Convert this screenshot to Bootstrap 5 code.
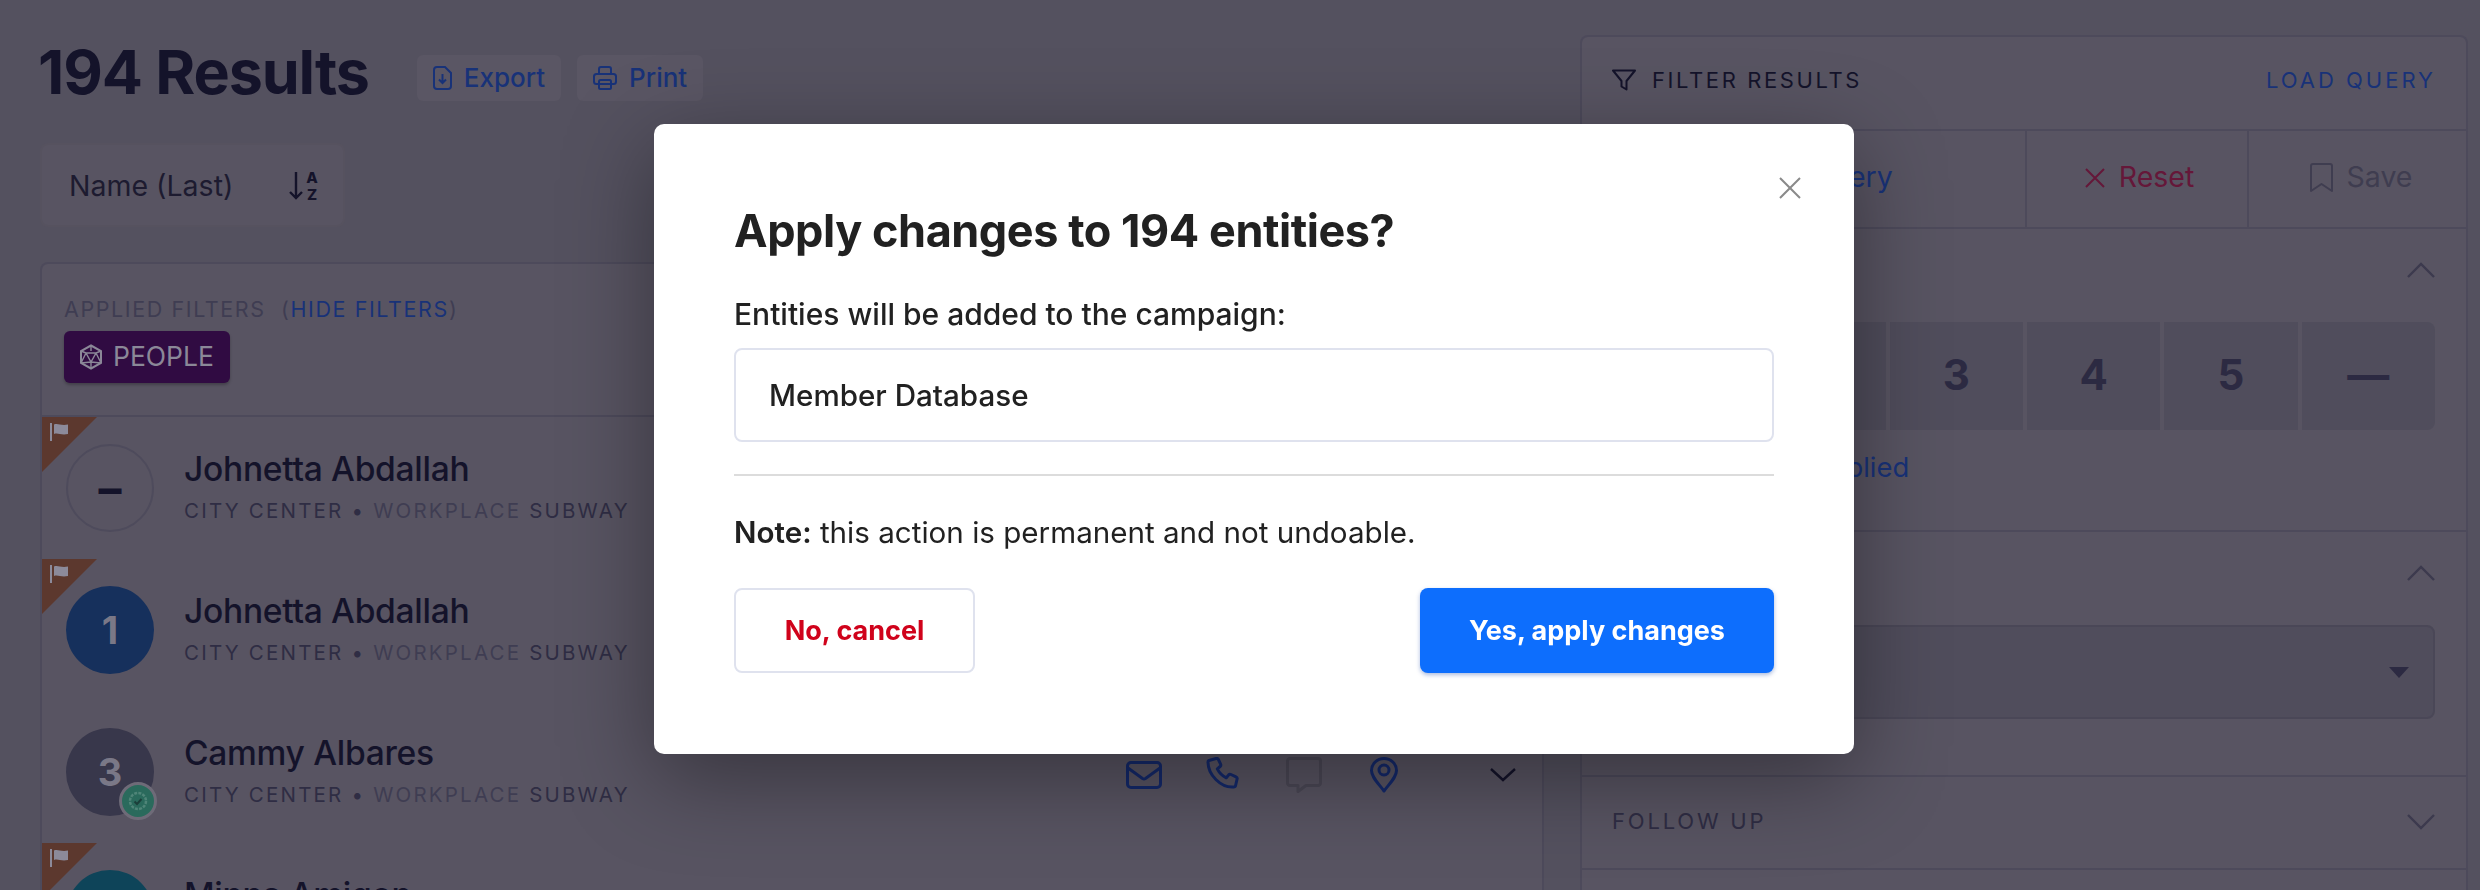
<!DOCTYPE html>
<html lang="en">
<head>
<meta charset="utf-8">
<title>194 Results</title>
<link rel="stylesheet" href="https://cdn.jsdelivr.net/npm/bootstrap@5.3.0/dist/css/bootstrap.min.css">
<style>
:root{--pg:#54515f;--pn:#585462;--ln:#4d4a5b;--ink:#14132a;--ink2:#2f2d44;--ink3:#3f3d52;--lnk:#183278;--ic:#14296b;--well:#504d5c;}
html,body{height:890px;overflow:hidden;}
body{background:var(--pg);color:var(--ink);font-family:"Inter","Liberation Sans",sans-serif;}
.shell{display:flex;gap:36px;padding:0 12px 0 40px;height:890px;overflow:hidden;}
.lhs{width:1504px;flex:none;}
.rhs{width:888px;flex:none;padding-top:35px;}
.headrow{display:flex;align-items:center;padding-top:55px;height:101px;}
.ttl{font-size:61px;font-weight:700;line-height:46px;letter-spacing:-1.100px;margin:0 48px 0 -2px;color:var(--ink);position:relative;top:-6px;}
.ghost{display:inline-flex;align-items:center;gap:12px;height:46px;padding:0 16px;background:#5a5664;border:0;border-radius:6px;color:var(--lnk);font-size:26px;font-weight:500;margin-right:16px;line-height:1;}
.sortbox{display:flex;align-items:center;justify-content:space-between;width:305px;height:84px;margin-top:42px;padding:2px 24px 0 27px;background:var(--pn);border:2px solid #56525f;border-radius:8px;font-size:28.500px;color:#1d1b30;}
.rescard{margin-top:35px;background:var(--pn);border:0;border-left:2px solid var(--ln);border-right:2px solid var(--ln);border-top:2px solid var(--ln);border-radius:8px 8px 0 0;}
.fhead{height:151px;padding:34px 24px 0 22px;}
.flab{font-size:21.500px;line-height:22px;letter-spacing:1.600px;color:var(--ink3);}
.flab a{color:var(--lnk);text-decoration:none;}
.pbadge{display:inline-flex;align-items:center;gap:10px;width:166px;height:52px;margin-top:11px;padding-left:15px;background:#300b42;border-radius:6px;color:#8b8898;font-size:26.500px;box-shadow:0 2px 3px rgba(0,0,0,.25);}
.rowitem{position:relative;display:flex;align-items:center;height:142px;padding:0 26px 0 24px;background:var(--pn);border:0;border-top:2px solid var(--ln);border-radius:0;color:var(--ink);}
.corner{position:absolute;left:0;top:0;width:55px;height:55px;background:#5c382e;clip-path:polygon(0 0,100% 0,0 100%);}
.corner svg{position:absolute;left:8px;top:6px;}
.avatar{position:relative;flex:none;width:88px;height:88px;border-radius:50%;display:flex;align-items:center;justify-content:center;font-size:38px;font-weight:700;color:#7a7887;}
.av-none{border:2px solid #4e4b5c;color:var(--ink);font-size:46px;}
.av-blue{background:#16305c;}
.av-gray{background:#38374b;}
.av-teal{background:#0e4459;}
.vbadge{position:absolute;right:-3px;bottom:-4px;width:38px;height:38px;border-radius:50%;background:#2a6a5c;border:3px solid #6e6b78;display:flex;align-items:center;justify-content:center;}
.who{margin-left:30px;position:relative;top:-1px;}
.nm{font-size:33.600px;line-height:38px;font-weight:500;letter-spacing:-.3px;color:var(--ink);}
.sb{margin-top:10px;font-size:20.500px;line-height:26px;letter-spacing:2.200px;color:var(--ink2);white-space:nowrap;}
.sb .dim{color:var(--ink3);}
.acts{margin:6px 0 0 auto;display:flex;align-items:center;gap:44px;}
.acts svg{display:block;}
.chev{margin:6px 0 0 88px;flex:none;}
.fpanel{background:var(--pn);border:2px solid var(--ln);border-bottom:0;border-radius:8px 8px 0 0;height:900px;}
.fph{display:flex;align-items:center;justify-content:space-between;height:92px;padding:0 30px 6px 30px;font-size:22px;letter-spacing:2.600px;color:var(--ink);}
.fph .lq{color:var(--lnk);letter-spacing:3px;}
.fbar{display:flex;height:100px;border-top:2px solid var(--ln);border-bottom:2px solid var(--ln);}
.fcell{display:flex;align-items:center;justify-content:center;gap:14px;font-size:28.500px;padding-bottom:3px;border-left:2px solid var(--ln);}
.fcell:first-child{flex:0 0 443px;border-left:0;color:var(--lnk);}
.fcell:nth-child(2){flex:0 0 222px;padding-left:5px;color:#651739;}
.fcell:nth-child(3){flex:1;padding-left:7px;color:#3f3d50;}
.fsec{position:relative;padding:0 31px 0 33px;border-bottom:2px solid var(--ln);}
.s1{height:303px;}.s2{height:245px;}.s3{height:93px;}
.sechead{display:flex;align-items:center;justify-content:space-between;padding-bottom:12px;font-size:22px;letter-spacing:2.800px;color:var(--ink2);}
.s1 .sechead{height:93px;}
.s2 .sechead{height:93px;}
.s3 .sechead{height:91px;padding-bottom:2px;margin-left:-3px;}
.nums{display:grid;grid-template-columns:repeat(6,1fr);gap:4px;height:108px;}
.numb{display:flex;align-items:center;justify-content:center;padding-bottom:4px;background:var(--well);font-size:42px;font-weight:700;color:#2c2a42;}
.numb:first-child{border-radius:8px 0 0 8px;}
.numb:last-child{border-radius:0 8px 8px 0;}
.lnk2{margin-top:20px;font-size:27.400px;line-height:34px;color:var(--lnk);white-space:nowrap;}
.selbox{display:flex;align-items:center;justify-content:flex-end;height:94px;padding-right:24px;background:var(--well);border:2px solid #4a4757;border-radius:8px;}
.dlg{max-width:1200px;margin:124px 0 0 654px;}
.dlg .modal-content{border:0;border-radius:10px;height:630px;padding:79px 80px 0;background:#fff;box-shadow:0 24px 90px rgba(0,0,0,.38);color:#212121;}
.xbtn{position:absolute;top:53px;right:53px;padding:0;border:0;background:none;line-height:0;}
.dt{font-size:45px;line-height:56px;font-weight:700;letter-spacing:-.45px;margin:0;color:#212121;}
.dl{display:block;font-size:30px;line-height:36px;font-weight:500;margin:37px 0 16px;}
.dinput{display:block;height:94px;width:100%;border:2px solid #dfe2ee;border-radius:8px;padding:0 33px;font-size:29.600px;font-weight:500;color:#212121;background:#fff;}
.dhr{margin:32px 0 38px;border:0;border-top:2px solid #dcdcdc;opacity:1;}
.dn{font-size:29.600px;line-height:36px;margin:0 0 38px;}
.dbtns{display:flex;justify-content:space-between;}
.bno,.byes{height:85px;padding-top:8px;border-radius:8px;font-size:27px;font-weight:700;}
.bno{width:241px;background:#fff;border:2px solid #dfe2ee;color:#d0021b;}
.byes{width:354px;background:#0d6efd;border:0;color:#fff;box-shadow:0 2px 4px rgba(13,60,160,.35);}
</style>
</head>
<body>
<svg width="0" height="0" class="d-none" aria-hidden="true">
<defs>
<symbol id="i-mail" viewBox="0 0 36 36"><rect x="1.500" y="5.500" width="33" height="25" rx="3.500" fill="none" stroke="currentColor" stroke-width="3"/><path d="M2 11l14.500 10.500a3 3 0 0 0 3 0L34 11" fill="none" stroke="currentColor" stroke-width="3"/></symbol>
<symbol id="i-phone" viewBox="0 0 36 36"><path d="M3 3.500l7-2c1-.3 2 .2 2.400 1l2.200 4.600c.4.9.2 1.800-.5 2.400l-2.800 2.300c2 4 5 7 9 9l2.200-2.700c.6-.7 1.600-1 2.500-.6l5 2.300c.9.4 1.300 1.300 1.100 2.200l-1.500 6.500c-.2 1-1 1.500-2 1.500C15 31 2 18 2 5c0-.7.4-1.300 1-1.500z" fill="none" stroke="currentColor" stroke-width="3" stroke-linejoin="round"/></symbol>
<symbol id="i-chat" viewBox="0 0 36 36"><path d="M4 1.500h28a2.500 2.500 0 0 1 2.500 2.500v22a2.500 2.500 0 0 1-2.500 2.500H20l-8 6v-6H4A2.500 2.500 0 0 1 1.500 26V4A2.500 2.500 0 0 1 4 1.500z" fill="none" stroke="currentColor" stroke-width="3" stroke-linejoin="round"/></symbol>
<symbol id="i-pin" viewBox="0 0 36 36"><path d="M18 34C12 26 5.500 20 5.500 13.500a12.500 12 0 0 1 25 0C30.500 20 24 26 18 34z" fill="none" stroke="currentColor" stroke-width="3" stroke-linejoin="round"/><circle cx="18" cy="13" r="5" fill="none" stroke="currentColor" stroke-width="3"/></symbol>
<symbol id="i-flag" viewBox="0 0 18 18"><rect x="0" y="0" width="2" height="18" fill="currentColor"/><path d="M4 1.500c4-1.500 7 1.500 14 0V11c-7 1.500-10-1.500-14 0z" fill="currentColor"/></symbol>
</defs>
</svg>
<div class="shell">
  <main class="lhs">
    <div class="headrow">
      <h1 class="ttl">194 Results</h1>
      <button class="ghost" type="button">
        <svg width="19" height="24" viewBox="0 0 19 24" fill="none" stroke="currentColor" stroke-width="2"><path d="M4 1h8l6 6v13a3 3 0 0 1-3 3H4a3 3 0 0 1-3-3V4a3 3 0 0 1 3-3z"/><path d="M9.500 8v9M6 13.500l3.500 3.500 3.500-3.500"/></svg>Export</button>
      <button class="ghost" type="button">
        <svg width="24" height="24" viewBox="0 0 24 24" fill="none" stroke="currentColor" stroke-width="2"><path d="M6 8V3a2 2 0 0 1 2-2h8a2 2 0 0 1 2 2v5"/><rect x="1" y="8" width="22" height="10" rx="2.500"/><rect x="6" y="14" width="12" height="9" rx="1.500"/></svg>Print</button>
    </div>
    <div class="sortbox"><span>Name (Last)</span>
      <svg width="30" height="30" viewBox="0 0 30 30" fill="none"><path d="M7 1v26M1 21l6 6 6-6" stroke="#14132a" stroke-width="2.400"/><text x="23" y="12" text-anchor="middle" font-family="Inter,sans-serif" font-size="15" font-weight="800" fill="#14132a">A</text><text x="23" y="29" text-anchor="middle" font-family="Inter,sans-serif" font-size="15" font-weight="800" fill="#14132a">Z</text></svg>
    </div>
    <section class="card rescard">
      <div class="fhead">
        <div class="flab">APPLIED FILTERS &nbsp;(<a href="#">HIDE FILTERS</a>)</div>
        <span class="pbadge">
          <svg width="24" height="26" viewBox="0 0 24 26" fill="none" stroke="#8b8898" stroke-width="2"><path d="M12 1.500l10 5.500v12l-10 5.500L2 19V7z"/><path d="M12 1.500V7M2 7l5 2M22 7l-5 2M7 9h10l-5 9zM2 19l5-10M22 19L17 9M12 18v6.500M2 19l10-1 10 1" stroke-width="1.400"/></svg>PEOPLE</span>
      </div>
      <ul class="list-group list-group-flush">
        <li class="list-group-item rowitem">
          <span class="corner"><svg width="18" height="18"><use href="#i-flag" color="#8c8a9a"/></svg></span>
          <span class="avatar av-none">–</span>
          <div class="who"><div class="nm">Johnetta Abdallah</div><div class="sb">CITY CENTER • <span class="dim">WORKPLACE</span> SUBWAY</div></div>
        </li>
        <li class="list-group-item rowitem">
          <span class="corner"><svg width="18" height="18"><use href="#i-flag" color="#8c8a9a"/></svg></span>
          <span class="avatar av-blue">1</span>
          <div class="who"><div class="nm">Johnetta Abdallah</div><div class="sb">CITY CENTER • <span class="dim">WORKPLACE</span> SUBWAY</div></div>
        </li>
        <li class="list-group-item rowitem">
          <span class="avatar av-gray">3<span class="vbadge"><svg width="22" height="22" viewBox="0 0 22 22" fill="none"><circle cx="11" cy="11" r="8" stroke="#4f8578" stroke-width="2.500" stroke-dasharray="3 1.200"/><path d="M7.500 11.500l2.500 2.500 4.500-5" stroke="#1b3f3a" stroke-width="2"/></svg></span></span>
          <div class="who"><div class="nm">Cammy Albares</div><div class="sb">CITY CENTER • <span class="dim">WORKPLACE</span> SUBWAY</div></div>
          <div class="acts">
            <svg width="36" height="36" color="#14296b"><use href="#i-mail"/></svg>
            <svg width="36" height="36" color="#14296b"><use href="#i-phone"/></svg>
            <svg width="36" height="36" color="#4b4856"><use href="#i-chat"/></svg>
            <svg width="36" height="36" color="#14296b"><use href="#i-pin"/></svg>
          </div>
          <svg class="chev" width="26" height="14" viewBox="0 0 26 14" fill="none" stroke="#14132a" stroke-width="2.400"><path d="M1 1l12 11L25 1"/></svg>
        </li>
        <li class="list-group-item rowitem">
          <span class="corner"><svg width="18" height="18"><use href="#i-flag" color="#8c8a9a"/></svg></span>
          <span class="avatar av-teal">2</span>
          <div class="who"><div class="nm">Minna Amigon</div><div class="sb">CITY CENTER • <span class="dim">WORKPLACE</span> SUBWAY</div></div>
        </li>
      </ul>
    </section>
  </main>
  <aside class="rhs">
    <div class="fpanel">
      <div class="fph">
        <span class="d-flex align-items-center gap-3"><svg width="24" height="22" viewBox="0 0 24 22" fill="none" stroke="#14132a" stroke-width="2" stroke-linejoin="round"><path d="M1 1.500h22L14.500 12v8.500l-5-3V12z"/></svg>FILTER RESULTS</span>
        <a class="lq text-decoration-none" href="#">LOAD QUERY</a>
      </div>
      <div class="fbar">
        <div class="fcell"><svg width="22" height="22" viewBox="0 0 22 22" fill="none" stroke="currentColor" stroke-width="2"><circle cx="9" cy="9" r="7.500"/><path d="M15 15l6 6"/></svg>Run Query</div>
        <div class="fcell"><svg width="20" height="20" viewBox="0 0 20 20" stroke="currentColor" stroke-width="2"><path d="M1 1l18 18M19 1L1 19"/></svg>Reset</div>
        <div class="fcell"><svg width="23" height="30" viewBox="0 0 23 30" fill="none" stroke="currentColor" stroke-width="2" stroke-linejoin="round"><path d="M3 1h17a2 2 0 0 1 2 2v25l-10.500-7L1 28V3a2 2 0 0 1 2-2z"/></svg>Save</div>
      </div>
      <div class="fsec s1">
        <div class="sechead"><span>SUPPORT LEVEL</span><svg width="28" height="16" viewBox="0 0 28 16" fill="none" stroke="#3c3a4e" stroke-width="2.400"><path d="M1 15L14 2l13 13"/></svg></div>
        <div class="nums"><div class="numb">1</div><div class="numb">2</div><div class="numb">3</div><div class="numb">4</div><div class="numb">5</div><div class="numb">—</div></div>
        <div class="lnk2">Include not yet applied</div>
      </div>
      <div class="fsec s2">
        <div class="sechead"><span>EVENTS</span><svg width="28" height="16" viewBox="0 0 28 16" fill="none" stroke="#3c3a4e" stroke-width="2.400"><path d="M1 15L14 2l13 13"/></svg></div>
        <div class="selbox"><svg width="20" height="11" viewBox="0 0 20 11"><path d="M0 0h20L10 11z" fill="#2c2a42"/></svg></div>
      </div>
      <div class="fsec s3">
        <div class="sechead"><span>FOLLOW UP</span><svg width="28" height="16" viewBox="0 0 28 16" fill="none" stroke="#3c3a4e" stroke-width="2.400"><path d="M1 1l13 13L27 1"/></svg></div>
      </div>
    </div>
  </aside>
</div>

<div class="modal d-block" tabindex="-1" role="dialog" aria-modal="true">
  <div class="modal-dialog dlg">
    <div class="modal-content">
      <button class="xbtn" type="button" aria-label="Close"><svg width="22" height="22" viewBox="0 0 22 22" stroke="#8a8a8a" stroke-width="2"><path d="M1 1l20 20M21 1L1 21"/></svg></button>
      <h2 class="dt">Apply changes to 194 entities?</h2>
      <label class="dl" for="camp">Entities will be added to the campaign:</label>
      <input id="camp" class="dinput" type="text" value="Member Database">
      <hr class="dhr">
      <p class="dn"><strong class="fw-semibold">Note:</strong> this action is permanent and not undoable.</p>
      <div class="dbtns">
        <button class="btn bno" type="button">No, cancel</button>
        <button class="btn byes" type="button">Yes, apply changes</button>
      </div>
    </div>
  </div>
</div>
<script src="https://cdn.jsdelivr.net/npm/bootstrap@5.3.0/dist/js/bootstrap.bundle.min.js"></script>
</body>
</html>
